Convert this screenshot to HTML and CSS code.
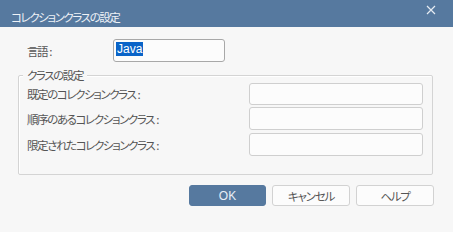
FILE: index.html
```html
<!DOCTYPE html>
<html lang="ja">
<head>
<meta charset="utf-8">
<link rel="stylesheet" href="styles.css">
</head>
<body>
<div class="dialog">
  <div class="titlebar">
    <span class="title">コレクションクラスの設定</span>
    <svg class="close" width="10" height="10" viewBox="0 0 10 10"><path d="M1 1L9 9M9 1L1 9" stroke="#e6ecf3" stroke-width="1.2" fill="none"/></svg>
  </div>
  <div class="content">
    <div class="lang-row">
      <span class="label lang-label">言語<span class="colon">:</span></span>
      <div class="input lang-input"><span class="sel">Java</span></div>
    </div>
    <fieldset class="group">
      <legend class="legend">クラスの設定</legend>
      <div class="row r1">
        <span class="label">既定のコレクションクラス<span class="colon">:</span></span>
        <div class="input field"></div>
      </div>
      <div class="row r2">
        <span class="label">順序のあるコレクションクラス<span class="colon">:</span></span>
        <div class="input field"></div>
      </div>
      <div class="row r3">
        <span class="label">限定されたコレクションクラス<span class="colon">:</span></span>
        <div class="input field"></div>
      </div>
    </fieldset>
    <div class="buttons">
      <button class="btn primary">OK</button>
      <button class="btn">キャンセル</button>
      <button class="btn">ヘルプ</button>
    </div>
  </div>
</div>
</body>
</html>
```
FILE: styles.css
```css
html, body {
  margin: 0;
  padding: 0;
  background: #f7f7f7;
}
body {
  width: 453px;
  height: 232px;
  overflow: hidden;
  font-family: "Noto Sans CJK JP", "Noto Sans", sans-serif;
  font-size: 11.5px;
  letter-spacing: -1.4px;
  color: #555555;
  font-feature-settings: "palt";
}
.dialog {
  width: 453px;
  height: 232px;
  display: flex;
  flex-direction: column;
}
.titlebar {
  height: 27px;
  background: #56799f;
  display: flex;
  align-items: center;
  justify-content: space-between;
  padding: 0 17px 0 11px;
  box-sizing: border-box;
}
.title {
  color: #eef2f7;
  margin-top: 7px;
}
.close {
  margin-top: -7px;
}
.content {
  flex: 1;
  display: flex;
  flex-direction: column;
}
.lang-row {
  display: flex;
  align-items: center;
  margin-top: 12px;
  height: 23px;
}
.label {
  color: #555555;
  line-height: 16px;
}
.colon {
  margin-left: 2px;
  letter-spacing: 0;
}
.lang-label {
  margin-left: 27px;
  width: 86px;
}
.input {
  box-sizing: border-box;
  background: #fcfcfc;
  border: 1px solid #cfcfcf;
  border-radius: 3px;
}
.lang-input {
  width: 112px;
  height: 23px;
  border-color: #a8a8a8;
  display: flex;
  align-items: center;
  padding-left: 2px;
}
.sel {
  background: #0a64c8;
  color: #fff;
  font-family: "Liberation Sans", "DejaVu Sans", sans-serif;
  font-size: 12px;
  letter-spacing: 0;
  line-height: 14px;
  padding: 0 1px;
  margin-top: -4px;
}
.group {
  margin: 13px 0 0 18px;
  width: 415px;
  height: 100px;
  box-sizing: border-box;
  border: 1px solid #d4d4d4;
  border-radius: 2px;
  box-shadow: inset 1px 1px 0 #ffffff;
  padding: 0;
  position: relative;
}
.legend {
  position: absolute;
  top: -9px;
  left: 4px;
  padding: 0 4px;
  background: #f7f7f7;
  line-height: 16px;
}
.row {
  display: flex;
  align-items: center;
  justify-content: space-between;
  padding: 0 9px 0 8px;
}
.r1 { margin-top: 7px; height: 22px; }
.r2 { margin-top: 2px; height: 23px; }
.r3 { margin-top: 3px; height: 23px; }
.field {
  width: 174px;
  height: 100%;
}
.buttons {
  display: flex;
  gap: 6px;
  margin: 10px 0 0 189px;
}
.btn {
  width: 78px;
  height: 21px;
  box-sizing: border-box;
  border: 1px solid #d2d2d2;
  border-radius: 3px;
  background: #fcfcfc;
  color: #555555;
  font-family: "Noto Sans CJK JP", "Noto Sans", sans-serif;
  font-feature-settings: "palt";
  font-size: 11.5px;
  letter-spacing: -1.2px;
  padding: 0;
  line-height: 18px;
}
.primary {
  width: 77px;
  background: #56799f;
  border-color: #56799f;
  color: #e8eef6;
  font-family: "Liberation Sans", sans-serif;
  font-size: 12px;
  letter-spacing: 0;
}
```
